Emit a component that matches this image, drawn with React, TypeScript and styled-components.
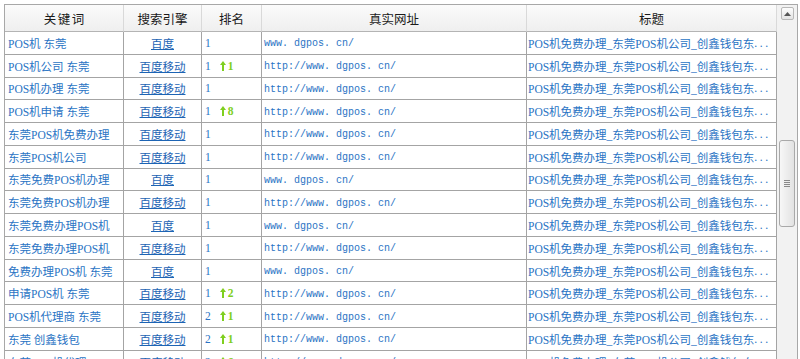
import React from "react";
import styled, { createGlobalStyle } from "styled-components";

const Global = createGlobalStyle`
  html, body { margin: 0; padding: 0; background: #fff; overflow: hidden; }
  body { font-family: "Liberation Serif", "Noto Sans CJK SC", serif; }
`;

const Frame = styled.div`
  margin: 4px 0 0 4px;
  width: 794px;
  height: 360px;
  box-sizing: border-box;
  border: 1px solid #a8a8a8;
  border-bottom: none;
  display: flex;
  overflow: hidden;
  background: #fff;
`;

const Table = styled.div`
  width: 772px;
  flex: none;
  display: grid;
  grid-template-columns: 119px 78px 60px 265px 250px;
  grid-template-rows: 27px;
  grid-auto-rows: 22.77px;
  align-content: start;
`;

const HeadCell = styled.div<{ $spacing?: number }>`
  box-sizing: border-box;
  display: flex;
  align-items: center;
  justify-content: center;
  border-right: 1px solid #d9d9d9;
  border-bottom: 1px solid #b4b4b4;
  background: linear-gradient(#fbfbfb, #efefef);
  font-family: "Noto Sans CJK SC", sans-serif;
  font-size: 12.5px;
  color: #1a1a1a;
  letter-spacing: ${(p) => p.$spacing ?? 0}px;
  padding-left: ${(p) => p.$spacing ?? 0}px;
  &:last-child { border-right: 1px solid #a8a8a8; }
`;

const Cell = styled.div<{ $center?: boolean; $pad?: number; $mono?: boolean }>`
  box-sizing: border-box;
  display: flex;
  align-items: center;
  justify-content: ${(p) => (p.$center ? "center" : "flex-start")};
  padding-left: ${(p) => p.$pad ?? 3}px;
  padding-top: ${(p) => (p.$mono ? 2 : 0)}px;
  border-right: 1px solid #a4a4a4;
  border-bottom: 1px solid #a4a4a4;
  white-space: pre;
  overflow: hidden;
  font-family: ${(p) =>
    p.$mono
      ? `"Liberation Mono", "Noto Sans CJK SC", monospace`
      : `"Liberation Serif", "Noto Sans CJK SC", serif`};
  font-size: ${(p) => (p.$mono ? "10px" : "11.5px")};
  color: #2a74c4;
`;

const EngineLink = styled.a`
  color: #1d64b4;
  text-decoration: underline;
  font-family: "Noto Sans CJK SC", sans-serif;
  font-size: 11.5px;
  cursor: pointer;
`;

const Rank = styled.span`
  color: #2a74c4;
  font-family: "Liberation Serif", serif;
  font-size: 11.5px;
`;

const Change = styled.span`
  display: inline-flex;
  align-items: center;
  gap: 2px;
  margin-left: 9px;
  color: #7fcf1f;
  font-family: "Liberation Serif", serif;
  font-size: 11.5px;
  font-weight: bold;
`;

const Dots = styled.span`
  letter-spacing: 2.6px;
`;

const ScrollBar = styled.div`
  width: 20px;
  flex: none;
  background: #f2f2f2;
  display: flex;
  flex-direction: column;
  align-items: center;
`;

const UpButton = styled.div`
  margin-top: 2px;
  width: 13px;
  height: 13px;
  box-sizing: border-box;
  border: 1px solid #b8b8b8;
  border-radius: 2px;
  background: linear-gradient(#fdfdfd, #e3e3e3);
  display: flex;
  align-items: center;
  justify-content: center;
`;

const Thumb = styled.div`
  margin-top: 120px;
  width: 16px;
  height: 87px;
  box-sizing: border-box;
  border: 1px solid #a9a9a9;
  border-radius: 3px;
  background: linear-gradient(90deg, #f7f7f7, #e2e2e2);
  display: flex;
  align-items: center;
  justify-content: center;
`;

const Grip = styled.div`
  width: 6px;
  display: flex;
  flex-direction: column;
  gap: 1px;
  & > i { display: block; height: 1px; background: #8a8a8a; }
`;

type Row = {
  kw: string;
  engine: string;
  rank: number;
  up?: number;
  url: string;
};

const M = "百度移动";
const B = "百度";
const H = "http://www.dgpos.cn/";
const W = "www.dgpos.cn/";

const rows: Row[] = [
  { kw: "POS机 东莞", engine: B, rank: 1, url: W },
  { kw: "POS机公司 东莞", engine: M, rank: 1, up: 1, url: H },
  { kw: "POS机办理 东莞", engine: M, rank: 1, url: H },
  { kw: "POS机申请 东莞", engine: M, rank: 1, up: 8, url: H },
  { kw: "东莞POS机免费办理", engine: M, rank: 1, url: H },
  { kw: "东莞POS机公司", engine: M, rank: 1, url: H },
  { kw: "东莞免费POS机办理", engine: B, rank: 1, url: W },
  { kw: "东莞免费POS机办理", engine: M, rank: 1, url: H },
  { kw: "东莞免费办理POS机", engine: B, rank: 1, url: W },
  { kw: "东莞免费办理POS机", engine: M, rank: 1, url: H },
  { kw: "免费办理POS机 东莞", engine: B, rank: 1, url: W },
  { kw: "申请POS机 东莞", engine: M, rank: 1, up: 2, url: H },
  { kw: "POS机代理商 东莞", engine: M, rank: 2, up: 1, url: H },
  { kw: "东莞 创鑫钱包", engine: M, rank: 2, up: 1, url: H },
  { kw: "东莞POS机代理", engine: M, rank: 2, up: 6, url: H },
];

const fmtUrl = (u: string) => u.replace(/\./g, ". ");

const UpArrow = () => (
  <svg width="6" height="10" viewBox="0 0 6 10">
    <path d="M3 0 L6 4 L4 4 L4 10 L2 10 L2 4 L0 4 Z" fill="#7fcf1f" />
  </svg>
);

export default function App() {
  return (
    <>
      <Global />
      <Frame>
        <Table>
          <HeadCell $spacing={1.5}>关键词</HeadCell>
          <HeadCell>搜索引擎</HeadCell>
          <HeadCell>排名</HeadCell>
          <HeadCell>真实网址</HeadCell>
          <HeadCell>标题</HeadCell>
          {rows.map((r, i) => (
            <React.Fragment key={i}>
              <Cell>{r.kw}</Cell>
              <Cell $center $pad={0}>
                <EngineLink>{r.engine}</EngineLink>
              </Cell>
              <Cell>
                <Rank>{r.rank}</Rank>
                {r.up !== undefined && (
                  <Change>
                    <UpArrow />
                    {r.up}
                  </Change>
                )}
              </Cell>
              <Cell $mono $pad={2}>{fmtUrl(r.url)}</Cell>
              <Cell $pad={1}>
                POS机免费办理_东莞POS机公司_创鑫钱包东<Dots>...</Dots>
              </Cell>
            </React.Fragment>
          ))}
        </Table>
        <ScrollBar>
          <UpButton>
            <svg width="7" height="4" viewBox="0 0 7 4">
              <path d="M3.5 0 L7 4 L0 4 Z" fill="#555" />
            </svg>
          </UpButton>
          <Thumb>
            <Grip>
              <i />
              <i />
              <i />
              <i />
            </Grip>
          </Thumb>
        </ScrollBar>
      </Frame>
    </>
  );
}
